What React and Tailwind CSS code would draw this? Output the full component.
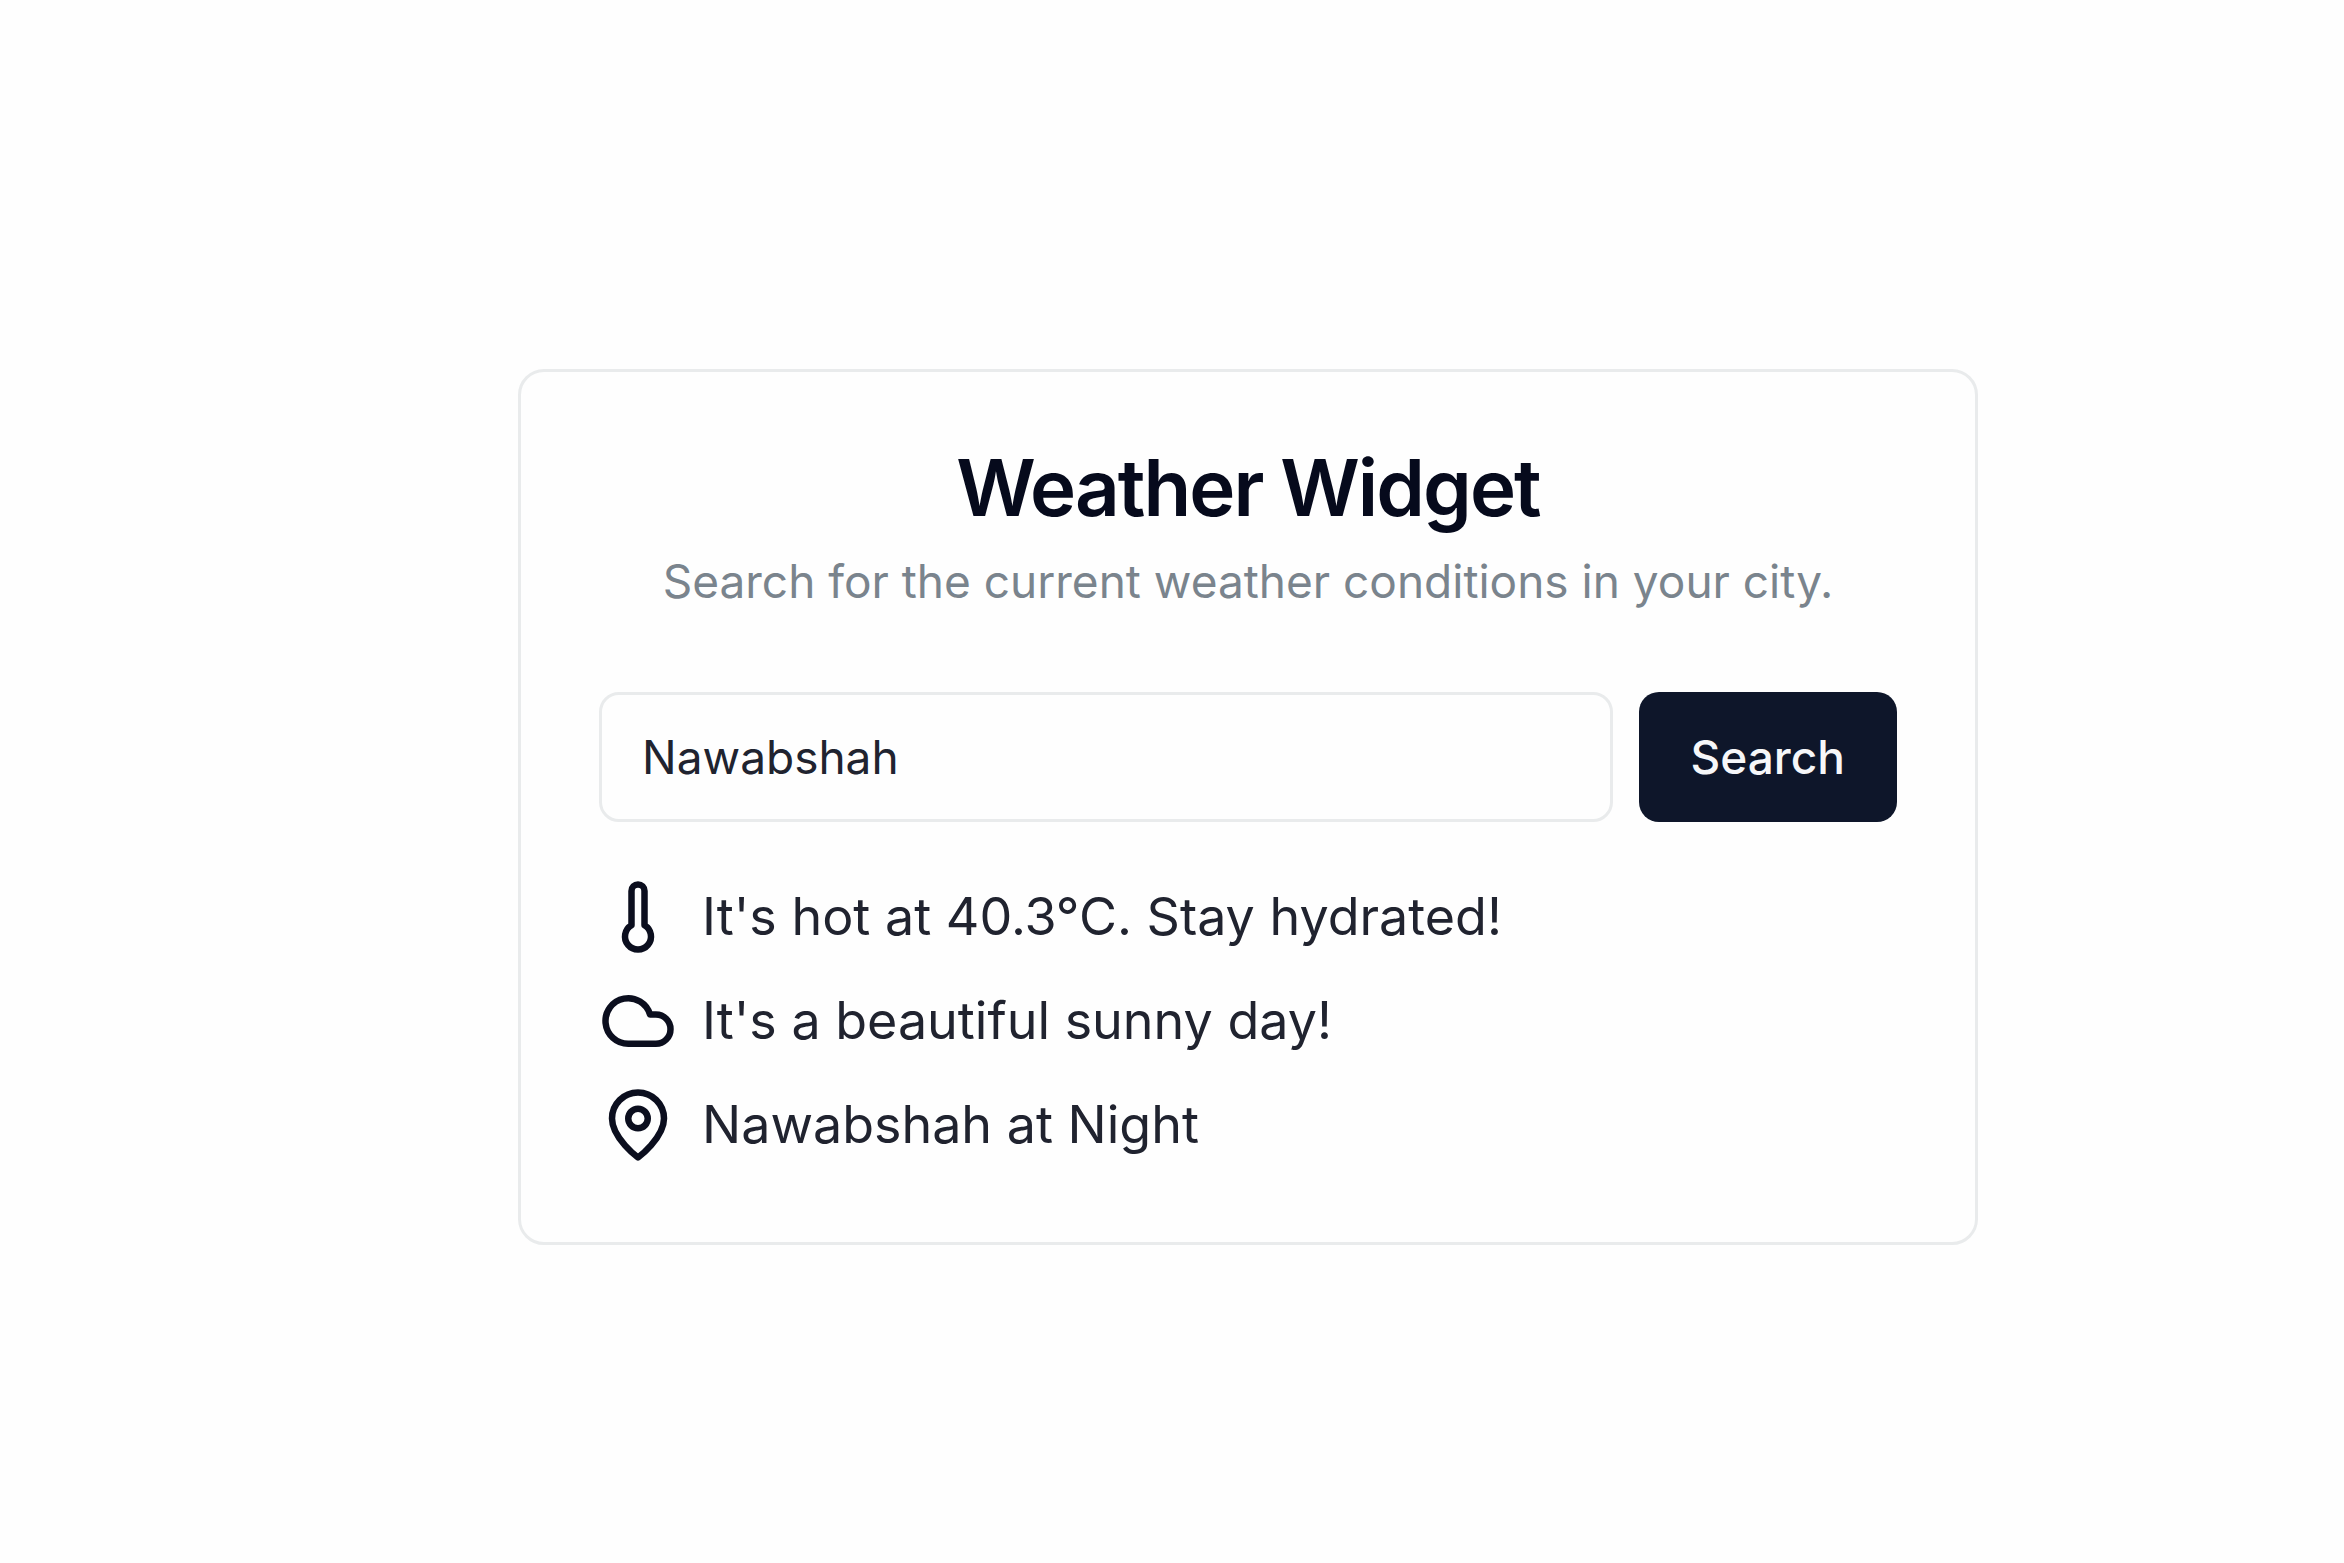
import { Thermometer, Cloud } from "lucide-react";

function Pin(props) {
  return (
    <svg viewBox="0 0 24 24" fill="none" stroke="currentColor" strokeLinecap="round" strokeLinejoin="round" {...props}>
      <path d="M20 10c0 6-8 12-8 12s-8-6-8-12a8 8 0 0 1 16 0Z" />
      <circle cx="12" cy="10" r="3" />
    </svg>
  );
}

function Row({ icon: Icon, children }) {
  return (
    <li className="flex items-center gap-[25px]">
      <Icon className="size-[78px] text-[#0b0e1e]" strokeWidth={2} aria-hidden="true" />
      <span>{children}</span>
    </li>
  );
}

export default function App() {
  return (
    <main className="flex min-h-screen items-start justify-center bg-[#fefefe] pt-[369px] pl-[152px] font-['Inter',sans-serif] text-[#20232f]">
      <section className="w-full max-w-[1460px] rounded-[26px] border-3 border-[#e9ebec] px-[78px] pt-[76px] pb-[78px]">
        <header className="text-center">
          <h1 className="text-[78px] leading-[80px] font-semibold tracking-tight text-[#060a1c]">Weather Widget</h1>
          <p className="mt-[20px] text-[46px] leading-[66px] text-[#7a848d]">Search for the current weather conditions in your city.</p>
        </header>
        <form className="mt-[78px] flex gap-[26px]" onSubmit={(e) => e.preventDefault()}>
          <input
            aria-label="City"
            type="text"
            defaultValue="Nawabshah"
            className="h-[130px] min-w-0 flex-1 rounded-[20px] border-3 border-[#e9ebec] px-[40px] text-[46px]"
          />
          <button type="submit" className="h-[130px] rounded-[20px] bg-[#0e162a] px-[52px] text-[46px] font-medium text-[#f6f7f9]">
            Search
          </button>
        </form>
        <ul className="mt-[56px] grid gap-[26px] text-[52px] leading-[78px]">
          <Row icon={Thermometer}>It's hot at 40.3°C. Stay hydrated!</Row>
          <Row icon={Cloud}>It's a beautiful sunny day!</Row>
          <Row icon={Pin}>Nawabshah at Night</Row>
        </ul>
      </section>
    </main>
  );
}
